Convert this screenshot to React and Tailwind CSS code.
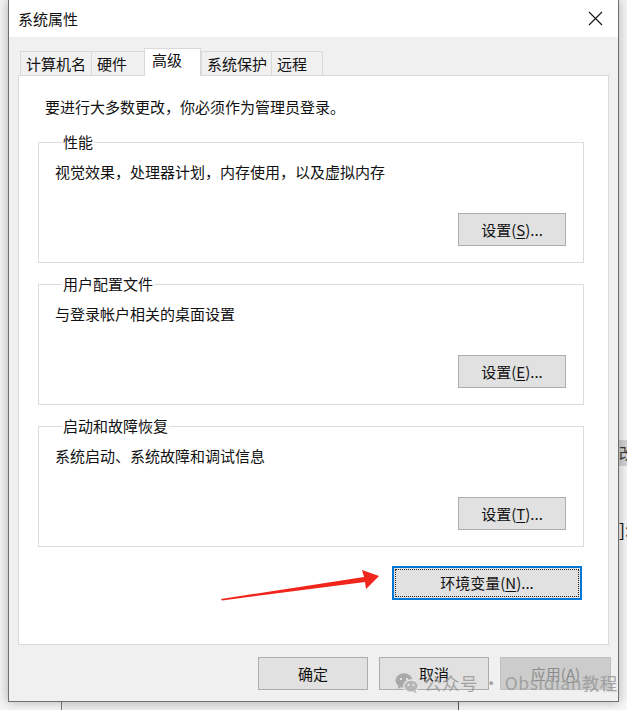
import React from 'react'

const FONT = { fontFamily: '"Noto Sans CJK SC", "Noto Sans", sans-serif' }

const TABS = [
  { label: '计算机名', w: 'w-[71px]' },
  { label: '硬件', w: 'w-[53px]' },
  { label: '高级', w: 'w-[57px]', active: true },
  { label: '系统保护', w: 'w-[70px]' },
  { label: '远程', w: 'w-[52px]' },
]

function Btn({ children, className = '', disabled = false }) {
  return (
    <button
      disabled={disabled}
      className={
        'flex h-[33px] items-center justify-center border text-[15px] leading-[20px] ' +
        (disabled
          ? 'border-[#bfbfbf] bg-[#cccccc] text-[#8b8b8b] '
          : 'border-[#adadad] bg-[#e1e1e1] text-[#111] ') +
        className
      }
    >
      {children}
    </button>
  )
}

function Key({ k }) {
  return <span className="underline underline-offset-2">{k}</span>
}

function Group({ title, desc, hotkey }) {
  return (
    <fieldset className="w-[546px] border border-[#dcdcdc] pb-[16px] pl-[16px] pr-[17px]">
      <legend className="ml-[7px] px-[1px] text-[15px] leading-[20px] text-[#111]">{title}</legend>
      <p className="pt-[10px] text-[15px] leading-[20px] text-[#111]">{desc}</p>
      <div className="mt-[31px] flex justify-end">
        <Btn className="w-[108px]">
          设置(<Key k={hotkey} />)...
        </Btn>
      </div>
    </fieldset>
  )
}

function WeChatIcon() {
  return (
    <svg width="24" height="22" viewBox="0 0 24 22">
      <ellipse cx="9" cy="8.5" rx="8.5" ry="7.2" fill="#a3a3a3" />
      <path d="M3.5 13.5 L2.6 17 L6.5 15 Z" fill="#a3a3a3" />
      <ellipse cx="16" cy="14" rx="7.3" ry="6.2" fill="#b3b3b3" stroke="#f0f0f0" strokeWidth="1.2" />
      <path d="M20.5 18.5 L21.5 21.2 L18 19.6 Z" fill="#b3b3b3" />
      <circle cx="6" cy="7" r="1.1" fill="#f0f0f0" />
      <circle cx="12" cy="7" r="1.1" fill="#f0f0f0" />
      <circle cx="13.5" cy="13" r="0.9" fill="#f0f0f0" />
      <circle cx="18.5" cy="13" r="0.9" fill="#f0f0f0" />
    </svg>
  )
}

export default function App() {
  return (
    <div className="relative h-[710px] w-[627px] overflow-hidden bg-[#eeeeee]" style={FONT}>
      <div className="flex h-[702px]">
        {/* left gutter */}
        <div className="w-[8px] bg-[#f2f2f2]" />

        {/* dialog window */}
        <div className="relative z-10 flex w-[611px] flex-col border-x border-b border-[#6f6f6f] bg-[#f0f0f0] shadow-[0_0_10px_rgba(0,0,0,0.28)]">
          {/* title bar */}
          <div className="flex h-[37px] items-center justify-between bg-white pl-[9px] pr-[8px]">
            <span className="text-[15px] leading-[20px] text-[#111]">系统属性</span>
            <div className="flex h-[37px] w-[30px] items-center justify-center">
              <svg width="15" height="15" viewBox="0 0 15 15">
                <path d="M1 1 L14 14 M14 1 L1 14" stroke="#111" strokeWidth="1.1" />
              </svg>
            </div>
          </div>

          {/* body */}
          <div className="flex flex-1 flex-col pl-[9px] pr-[9px] pt-[11px]">
            {/* tabs */}
            <div className="flex items-end pl-[2px]">
              {TABS.map((t) =>
                t.active ? (
                  <div
                    key={t.label}
                    className={`${t.w} relative z-10 -mb-px h-[28px] border border-b-0 border-[#d9d9d9] bg-white pl-[7px] pt-[1px] text-[15px] leading-[20px] text-[#111]`}
                  >
                    {t.label}
                  </div>
                ) : (
                  <div
                    key={t.label}
                    className={`${t.w} h-[24px] border border-b-0 border-r-0 border-[#d9d9d9] bg-[#f0f0f0] pl-[5px] pt-[2px] text-[15px] leading-[20px] text-[#111] last:border-r`}
                  >
                    {t.label}
                  </div>
                ),
              )}
            </div>

            {/* tab panel */}
            <div className="flex h-[570px] w-[591px] flex-col border border-[#d9d9d9] bg-white px-[19px] pt-[21px]">
              <p className="pl-[7px] text-[15px] leading-[20px] text-[#111]">要进行大多数更改，你必须作为管理员登录。</p>
              <div className="mt-[15px] flex flex-col gap-[11px]">
                <Group title="性能" desc="视觉效果，处理器计划，内存使用，以及虚拟内存" hotkey="S" />
                <Group title="用户配置文件" desc="与登录帐户相关的桌面设置" hotkey="E" />
                <Group title="启动和故障恢复" desc="系统启动、系统故障和调试信息" hotkey="T" />
              </div>
              <div className="mt-[19px] flex w-[546px] justify-end pr-[2px]">
                <button className="flex h-[34px] w-[190px] items-center justify-center border-2 border-[#0078d7] bg-[#e1e1e1] p-[1px]">
                  <span className="flex h-full w-full items-center justify-center border border-dotted border-[#222] text-[15px] leading-[20px] text-[#111]">
                    环境变量(<Key k="N" />)...
                  </span>
                </button>
              </div>
            </div>

            {/* dialog buttons */}
            <div className="mt-[12px] flex justify-end gap-[11px] pr-[-2px] mr-[-2px]">
              <Btn className="w-[110px]">确定</Btn>
              <Btn className="w-[110px]">取消</Btn>
              <Btn className="w-[111px]" disabled>
                应用(<Key k="A" />)
              </Btn>
            </div>
          </div>
        </div>

        {/* right strip: background window peeking out */}
        <div className="flex w-[8px] flex-col bg-[#f4f4f4]">
          <div className="h-[440px]" />
          <div className="h-[26px] overflow-hidden bg-[#d2d2d2] text-[15px] leading-[26px] text-[#333]">改</div>
          <div className="h-[50px]" />
          <div className="h-[26px] overflow-hidden text-[18px] leading-[26px] text-[#111]">]:</div>
        </div>
      </div>

      {/* below the window */}
      <div className="flex h-[8px]">
        <div className="w-[61px] bg-[#f4f4f4]" />
        <div className="w-[397px] border-l border-[#777] bg-[#ededed]" />
        <div className="flex-1 border-l border-[#555] bg-[#f6f6f6]" />
      </div>

      {/* red annotation arrow */}
      <svg className="pointer-events-none absolute left-0 top-0 z-20" width="627" height="710">
        <polygon points="221,599 364,577 362,570 379,576 366,589 365,582 222,600.5" fill="#f0261d" />
      </svg>

      {/* watermark */}
      <div className="pointer-events-none absolute left-[395px] top-[671px] z-20 flex items-center gap-[5px] text-[#9c9c9c] opacity-90">
        <WeChatIcon />
        <span className="text-[17.5px] leading-[24px] tracking-[0.5px]">公众号 · Obsidian教程</span>
      </div>
    </div>
  )
}
